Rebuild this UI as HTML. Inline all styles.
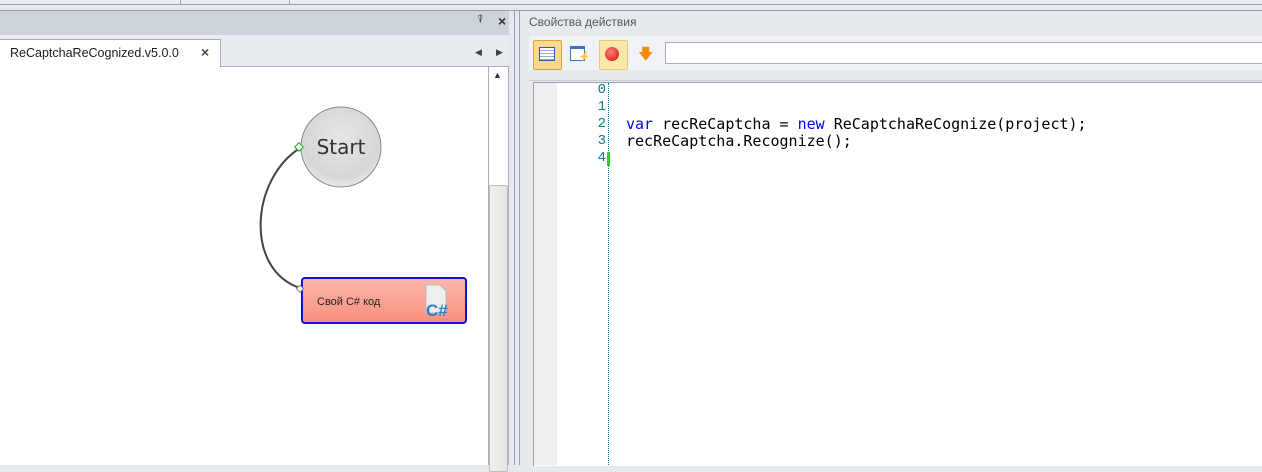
<!DOCTYPE html>
<html><head><meta charset="utf-8"><style>
body{margin:0;width:1262px;height:465px;overflow:hidden;background:#e6e9ee;font-family:"Liberation Sans",sans-serif;position:relative}
.a{position:absolute}
</style></head><body>
<div class="a" style="left:0;top:0;width:1262px;height:4px;background:#e9ecf0"></div>
<div class="a" style="left:0;top:4px;width:1262px;height:1px;background:#999fa8"></div>
<div class="a" style="left:180px;top:0;width:1px;height:4px;background:#aaa"></div>
<div class="a" style="left:289px;top:0;width:1px;height:4px;background:#aaa"></div>
<div class="a" style="left:0;top:5px;width:1262px;height:5px;background:#e6e9ee"></div>
<div class="a" style="left:0;top:10px;width:1262px;height:1px;background:#999fa8"></div>
<!-- left panel -->
<div class="a" style="left:0;top:11px;width:515px;height:24px;background:#cdd3db"></div>
<div class="a" style="left:514px;top:11px;width:1px;height:454px;background:#999fa8"></div>
<div class="a" style="left:477px;top:14px;font-size:11px;color:#333">&#x2352;</div>
<div class="a" style="left:498px;top:13px;font-size:14px;font-weight:bold;color:#333">×</div>
<div class="a" style="left:0;top:35px;width:514px;height:31px;background:#e8ebef"></div>
<div class="a" style="left:0;top:39px;width:220px;height:28px;background:#fff;border-right:1px solid #a9aeb6;border-top:1px solid #a9aeb6"></div>
<div class="a" style="left:10px;top:46px;font-size:12.5px;color:#1a1a2a">ReCaptchaReCognized.v5.0.0</div>
<div class="a" style="left:201px;top:44px;font-size:14px;font-weight:bold;color:#444">×</div>
<div class="a" style="left:475px;top:47px;font-size:9px;color:#444">◀</div>
<div class="a" style="left:496px;top:47px;font-size:9px;color:#444">▶</div>
<div class="a" style="left:221px;top:66px;width:288px;height:1px;background:#a9aeb6"></div>
<div class="a" style="left:0;top:67px;width:488px;height:398px;background:#fff"></div>
<div class="a" style="left:488px;top:66px;width:1px;height:399px;background:#a9aeb6"></div>
<div class="a" style="left:489px;top:67px;width:19px;height:398px;background:#fff"></div>
<div class="a" style="left:493px;top:70px;font-size:9px;color:#333">▲</div>
<div class="a" style="left:489px;top:185px;width:17px;height:285px;background:linear-gradient(90deg,#f1f1f1,#e4e4e4);border:1px solid #bbb;border-radius:2px"></div>
<div class="a" style="left:508px;top:66px;width:1px;height:399px;background:#a9aeb6"></div>
<div class="a" style="left:509px;top:11px;width:5px;height:454px;background:#e6e9ee"></div>
<div class="a" style="left:515px;top:11px;width:4px;height:454px;background:#e6e9ee"></div>
<div class="a" style="left:519px;top:11px;width:1px;height:454px;background:#999fa8"></div>
<svg class="a" style="left:250px;top:100px" width="230" height="240">
<defs><radialGradient id="g" cx="50%" cy="40%" r="60%"><stop offset="0" stop-color="#e6e6e6"/><stop offset="0.8" stop-color="#d6d6d6"/><stop offset="1" stop-color="#e8e8e8"/></radialGradient>
<linearGradient id="r" x1="0" y1="0" x2="0" y2="1"><stop offset="0" stop-color="#fbb8ac"/><stop offset="1" stop-color="#f88f7d"/></linearGradient></defs>
<circle cx="91" cy="47" r="40" fill="url(#g)" stroke="#888"/>
<text x="91" y="54" font-size="20" fill="#333" text-anchor="middle" font-family="DejaVu Sans">Start</text>
<path d="M50 48 C0 80,-5 170,50 188" fill="none" stroke="#444" stroke-width="2"/>
<rect x="46" y="44" width="6" height="6" transform="rotate(45 49 47)" fill="#fff" stroke="#2a2"/>
<rect x="52" y="178" width="164" height="45" rx="3" fill="url(#r)" stroke="#1010e0" stroke-width="2"/>
<rect x="48" y="186" width="5" height="5" transform="rotate(45 50 188)" fill="#fff" stroke="#888"/>
<text x="67" y="205" font-size="11" fill="#222">Свой C# код</text>
<path d="M176 185h14l6 6v22h-20z" fill="#eee" stroke="#bbb"/>
<text x="176" y="216" font-size="17" font-weight="bold" fill="#2c7fd0">C#</text>
</svg>
<!-- right panel -->
<div class="a" style="left:529px;top:15px;font-size:12px;color:#555">Свойства действия</div>
<div class="a" style="left:529px;top:36px;width:733px;height:34px;background:#f0f2f5"></div>
<div class="a" style="left:533px;top:40px;width:27px;height:28px;background:#fbd98c;border:1px solid #d8a24a;border-radius:2px"></div>
<div class="a" style="left:539px;top:47px;width:14px;height:12px;border:1px solid #2a5ea8;background:repeating-linear-gradient(#fff 0 2px,#8fb0d8 2px 3px)"></div>
<div class="a" style="left:570px;top:46px;width:13px;height:11px;border:1px solid #3a70c0;border-top:3px solid #3a70c0;background:#fff"></div>
<div class="a" style="left:578px;top:52px;font-size:10px;color:#e8a000">⚡</div>
<div class="a" style="left:599px;top:40px;width:27px;height:28px;background:#fbe7a8;border:1px solid #e8c870;border-radius:2px"></div>
<div class="a" style="left:605px;top:47px;width:14px;height:14px;border-radius:50%;background:radial-gradient(circle at 40% 35%,#ff8070,#d01010)"></div>
<div class="a" style="left:638px;top:44px;font-size:15px;color:#f08a10">🡇</div>
<div class="a" style="left:665px;top:42px;width:597px;height:20px;background:#fff;border:1px solid #a9aeb6"></div>
<div class="a" style="left:529px;top:80px;width:733px;height:1px;background:#c8ccd2"></div>
<div class="a" style="left:533px;top:82px;width:729px;height:383px;background:#fff;border-left:1px solid #999fa8;border-top:1px solid #999fa8"></div>
<div class="a" style="left:534px;top:83px;width:23px;height:382px;background:#efefef"></div>
<div class="a" style="left:608px;top:83px;height:382px;border-left:1px dotted #008080"></div>
<div class="a" style="left:607px;top:152px;width:3px;height:14px;background:#3c3"></div>
<div class="a" style="left:590px;top:82px;font-family:'Liberation Mono',monospace;font-size:14px;line-height:17px;color:#008080;text-align:right;width:16px">0<br>1<br>2<br>3<br>4</div>
<div class="a" style="white-space:pre;left:626px;top:116px;font-family:'DejaVu Sans Mono',monospace;font-size:15px;line-height:17px;color:#000"><span style="color:#0000ff">var</span> recReCaptcha = <span style="color:#0000ff">new</span> ReCaptchaReCognize(project);<br>recReCaptcha.Recognize();</div>
</body></html>
